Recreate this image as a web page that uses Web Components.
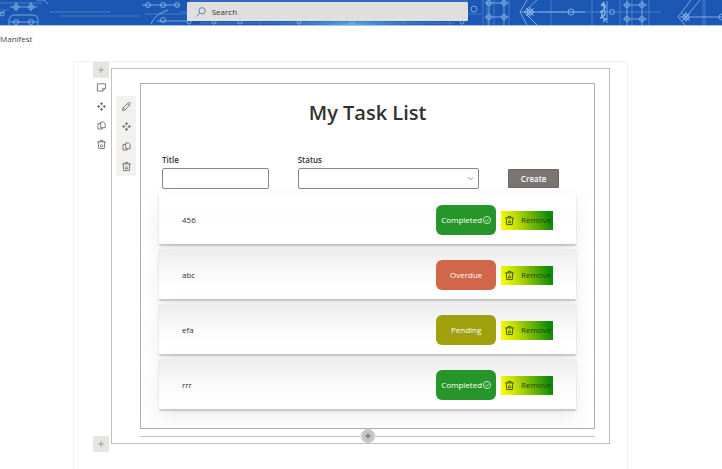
<!DOCTYPE html>
<html lang="en">
<head>
<meta charset="utf-8">
<title>My Task List</title>
<style>
html, body { margin: 0; }
body { font-family: "Open Sans", "Noto Sans", sans-serif; font-size: 8px; line-height: 12px; color: #323130; background: #fff; overflow: hidden; }
</style>
</head>
<body>
<site-page></site-page>
<script>
const define = (name, html, setup) => customElements.define(name, class extends HTMLElement {
  connectedCallback() {
    if (this.shadowRoot) return;
    const t = document.createElement('template');
    t.innerHTML = html;
    this.attachShadow({ mode: 'open' }).append(t.content.cloneNode(true));
    if (setup) setup(this, this.shadowRoot);
  }
});

const icons = {
  plus: '<path d="M5.5 1.5v8M1.5 5.5h8"/>',
  note: '<path d="M.5 1h10v5.500L7 9.800H.5zM10.500 6.500H7v3.300"/>',
  move: '<path d="M5.500 2.500v1.500M5.500 7v1.500M2.500 5.500h1.500M7 5.500h1.500"/><path class="f" d="M5.500 0l2.200 2.700h-4.400zM5.500 11l2.200-2.700h-4.400zM0 5.500l2.700-2.200v4.400zM11 5.500l-2.700-2.200v4.400z"/>',
  copy: '<path d="M4.500 1.200h3.300l2.200 2v5H4.500zM4.500 3H1.200v6.800h5.300V8.200"/>',
  trash: '<path d="M.3 2.300h10.400M3.800 2.300V.5h3.400v1.800M1.500 2.300l.6 8.200h6.800l.6-8.200M4.200 8.200V6.500l1.300-1.300 1.300 1.300v1.700z"/>',
  pencil: '<path d="M.5 10.500l.9-3.400L7.700 1q1-.9 2 .1t0 2L3.900 9.600zM6.700 2.200l2.100 2.100M1.400 7.100l2.500 2.500"/>',
  search: '<circle cx="6.700" cy="4.200" r="3.500"/><path d="M4.200 6.700L.3 10.600"/>',
  check: '<circle cx="5.500" cy="5.500" r="4.900"/><path d="M3.200 5.600l1.700 1.700 3.200-3.500"/>',
  chevron: '<path d="M1.500 3.500l4 4 4-4"/>'
};

define('ui-icon', `<style>
:host { display: inline-flex; width: var(--size, 11px); height: var(--size, 11px); flex: none; }
svg { width: 100%; height: 100%; fill: none; stroke: currentColor; stroke-width: 1; overflow: visible; }
.f { fill: currentColor; stroke: none; }
</style><svg viewBox="0 0 11 11" aria-hidden="true"></svg>`, (el, root) => {
  root.querySelector('svg').innerHTML = icons[el.getAttribute('name')];
});

define('icon-button', `<style>
:host { display: block; }
button { display: flex; align-items: center; justify-content: center; width: 100%; height: 100%; padding: 0; border: 0; background: none; color: inherit; }
</style><button type="button"><ui-icon></ui-icon></button>`, (el, root) => {
  root.querySelector('button').setAttribute('aria-label', el.getAttribute('label'));
  const i = document.createElement('ui-icon');
  i.setAttribute('name', el.getAttribute('icon'));
  root.querySelector('ui-icon').replaceWith(i);
});

define('site-header', `<style>
:host { display: grid; height: 26px; background: #1d57b0; justify-items: center; align-items: start; border-bottom: 1px solid #a9c4ea; box-sizing: border-box; }
.art, .search { grid-area: 1 / 1; }
.art { width: 100%; height: 25px; fill: none; stroke: #8fbdec; stroke-width: .8; }
.art .dim { stroke: #5289d2; }
.search { width: 39%; height: 19px; margin-top: 2px; margin-right: 67px; display: flex; align-items: center; gap: 6px; padding: 1px 9px 0; box-sizing: border-box; background: #e1dfde; border-radius: 1px; color: #4c78ae; --size: 10px; }
input { flex: 1; min-width: 0; border: 0; background: none; padding: 0; font: inherit; color: #323130; outline: 0; }
input::placeholder { color: #323130; opacity: 1; }
</style>
<svg class="art" viewBox="0 0 722 25" preserveAspectRatio="none" aria-hidden="true">
<defs><radialGradient id="g"><stop offset="0" stop-color="#64b7ee"/><stop offset="1" stop-color="#1d57b0" stop-opacity="0"/></radialGradient></defs>
<rect x="0" y="0" width="722" height="25" fill="#1c58b3" stroke="none"/>
<ellipse cx="352" cy="24" rx="100" ry="9" fill="url(#g)" stroke="none"/>
<g class="dim"><path d="M0 3h42M60 16h80M145 14h42M0 10h8M50 12h60M551 0v25M592 0v25M620 0v25M632 0v25M649 0v25M483 0v25M487 0v25M509 0v25M703 0v25M705 0v25M494 0v25M538 12h117M180 12h7M468 14h14M655 12h6M190 1h278M200 23h255M260 20v5M300 20v5M404 20v5M450 20v5"/></g>
<path d="M10 7h27M10 22h27M16 2v9M31 2v9M9 25v-5q1-5 6-5h17q6 0 6 5v5M37 0h7l4 4M0 14l5-3M142 5h38M151 24q3-8 12-12l5-2M157 21h30"/>
<path d="M485 3h24M485 17h24M489 0v25M504 0v25M520 12h65M537 0l-13 12 13 13M527 0l-7 12 7 13M623 5h24M623 19h24M627 0v25M642 0v25M691 0l-13 17 7 8M700 0l-14 17M680 17h42M607 1v22M530 7v10M525 12h10M526 8l8 8M534 8l-8 8M686 12v10M682 13l8 8M690 13l-8 8"/>
<path stroke-width="1.300" d="M604 2l-3 4q5-3 4 1t-5 5q6-3 5 1t-5 5q5-2 4 3l3-3M604 3v5M602 12v6"/>
<g><circle cx="16" cy="7" r="2.500"/><circle cx="31" cy="7" r="2.500"/><circle cx="16" cy="22" r="2.500"/><circle cx="31" cy="22" r="2.500"/><circle cx="2" cy="14" r="2"/>
<circle cx="148" cy="5" r="2.500"/><circle cx="163" cy="5" r="2.500"/><circle cx="177" cy="5" r="2.500"/><circle cx="163" cy="20" r="2.500"/>
<circle cx="474" cy="9" r="3"/><circle cx="489" cy="3" r="2.500"/><circle cx="504" cy="3" r="2.500"/><circle cx="489" cy="17" r="2.500"/><circle cx="504" cy="17" r="2.500"/>
<circle cx="530" cy="12" r="3"/><circle cx="571" cy="12" r="3"/><circle cx="612" cy="12" r="2.500"/><circle cx="627" cy="5" r="2.500"/><circle cx="642" cy="5" r="2.500"/><circle cx="627" cy="19" r="2.500"/><circle cx="642" cy="19" r="2.500"/><circle cx="686" cy="17" r="3"/><circle cx="722" cy="17" r="3"/>
<circle cx="189" cy="22" r="2"/><circle cx="214" cy="22" r="2"/><circle cx="240" cy="22" r="2"/><circle cx="299" cy="22" r="2"/><circle cx="352" cy="22" r="2"/><circle cx="462" cy="22" r="2"/></g>
</svg>
<label class="search"><ui-icon name="search"></ui-icon><input type="text" placeholder="Search" aria-label="Search"></label>`);

define('tool-strip', `<style>
:host { display: flex; flex-direction: column; color: #66625f; --size: 9px; }
icon-button { height: var(--step, 20px); }
</style>`, (el, root) => {
  for (const n of el.getAttribute('tools').split(' ')) {
    const b = document.createElement('icon-button');
    b.setAttribute('icon', n); b.setAttribute('label', n);
    root.append(b);
  }
});

define('status-pill', `<style>
:host { display: flex; align-items: center; justify-content: center; gap: 1px; width: 60px; height: 30px; border-radius: 6px; color: #fff; background: #27962a; --size: 8px; white-space: nowrap; }
:host([kind=overdue]) { background: #d1664a; }
:host([kind=pending]) { background: #9fa00c; }
:host(:not([kind=completed])) ui-icon { display: none; }
</style><slot></slot><ui-icon name="check"></ui-icon>`);

define('task-row', `<style>
:host { display: flex; align-items: center; gap: 5px; height: 50px; padding: 2px 23px 0; box-sizing: border-box; border-radius: 1px;
  background: linear-gradient(var(--row-top, #ececec), var(--row-mid, #fafafa) 50%, #fff 75%); box-shadow: 0 2px 2px rgba(0,0,0,.2), 0 8px 22px rgba(0,0,0,.08); }
.name { flex: 1; }
button { display: flex; align-items: center; justify-content: space-between; width: 52px; height: 19px; padding: 0 2px 0 4px; border: 0; font: inherit; color: #1f4310; background: linear-gradient(75deg, #f6fa00 5%, #c8e000 28%, #0d8a08 92%); --size: 9px; }
</style><span class="name"><slot></slot></span><status-pill></status-pill><button type="button"><ui-icon name="trash"></ui-icon>Remove</button>`, (el, root) => {
  const p = root.querySelector('status-pill'), s = el.getAttribute('status');
  p.setAttribute('kind', s.toLowerCase());
  p.textContent = s;
});

define('task-form', `<style>
:host { display: block; }
form { display: grid; grid-template-columns: 107fr 182fr 51px; column-gap: 29px; align-items: end; padding: 0 17px 0 3px; }
.field { display: grid; gap: 2px; }
label { font-weight: 600; }
input, select { box-sizing: border-box; width: 100%; height: 21px; border: 1px solid #8a8886; border-radius: 2px; background: #fff; font: inherit; color: inherit; padding: 0 6px; appearance: none; }
.pick { display: grid; align-items: center; }
.pick > * { grid-area: 1 / 1; }
.pick ui-icon { justify-self: end; margin-right: 5px; --size: 7px; color: #605e5c; pointer-events: none; }
button { height: 19px; margin-bottom: 1px; border: 1px solid #6b6564; border-radius: 1px; background: #7a7473; color: #fff; font: inherit; font-weight: 600; padding: 0; }
</style><form>
<div class="field"><label for="t">Title</label><input id="t" type="text"></div>
<div class="field"><label for="s">Status</label><div class="pick"><select id="s"><option></option></select><ui-icon name="chevron"></ui-icon></div></div>
<button type="button">Create</button></form>`);

define('task-board', `<style>
:host { display: block; border: 1px solid #b0aeac; padding: 14px 18px 19px; overflow: hidden; min-width: 0; background: #fff; }
h1 { margin: 0 0 26px; font-size: 20px; line-height: 30px; font-weight: 600; text-align: center; }
.list { display: grid; gap: 5px; margin-top: 5px; }
task-row:first-child { --row-top: #fff; --row-mid: #fefefe; }
</style><h1>My Task List</h1><task-form></task-form>
<div class="list"><task-row status="Completed">456</task-row><task-row status="Overdue">abc</task-row><task-row status="Pending">efa</task-row><task-row status="Completed">rrr</task-row></div>`);

define('page-section', `<style>
:host { display: grid; grid-template-columns: 20px 1fr; column-gap: 4px; border: 1px solid #c2c0be; padding: 14px 14px 0 4px; min-width: 0; }
tool-strip { align-self: start; margin-top: 13px; background: #f3f1f0; }
.add { grid-column: 2; display: grid; align-items: center; justify-items: center; height: 14px; }
.add > * { grid-area: 1 / 1; }
hr { width: 100%; margin: 0; border: 0; border-top: 1px solid #c2c0be; }
.add icon-button { width: 14px; height: 14px; border-radius: 7px; background: #c8c6c4; color: #484644; --size: 8px; }
</style><tool-strip tools="pencil move copy trash"></tool-strip><slot></slot>
<div class="add"><hr><icon-button icon="plus" label="Add a web part"></icon-button></div>`);

define('site-page', `<style>
:host { display: flex; flex-direction: column; min-height: 100vh; }
nav { height: 35px; box-sizing: border-box; padding-top: 7px; }
a { color: #484644; text-decoration: none; }
main { flex: 1; display: grid; grid-template-columns: 16px 1fr; column-gap: 2px; align-content: start; margin: 0 13% 0 73px; padding: 0 17px 0 19px; border: 1px solid #f1f1f1; border-bottom: 0; }
.rail { display: flex; flex-direction: column; justify-content: space-between; color: #8a8886; --size: 8px; }
.rail tool-strip { --step: 19px; }
.rail > div > icon-button, .rail > icon-button { height: 16px; background: #e6e5e4; }
page-section { margin: 6px 0 8px; }
</style><site-header></site-header><nav><a href="#">Manifest</a></nav>
<main><div class="rail"><div><icon-button icon="plus" label="Add a section"></icon-button><tool-strip tools="note move copy trash"></tool-strip></div><icon-button icon="plus" label="Add a section"></icon-button></div>
<page-section><task-board></task-board></page-section></main>`);
</script>
</body>
</html>
